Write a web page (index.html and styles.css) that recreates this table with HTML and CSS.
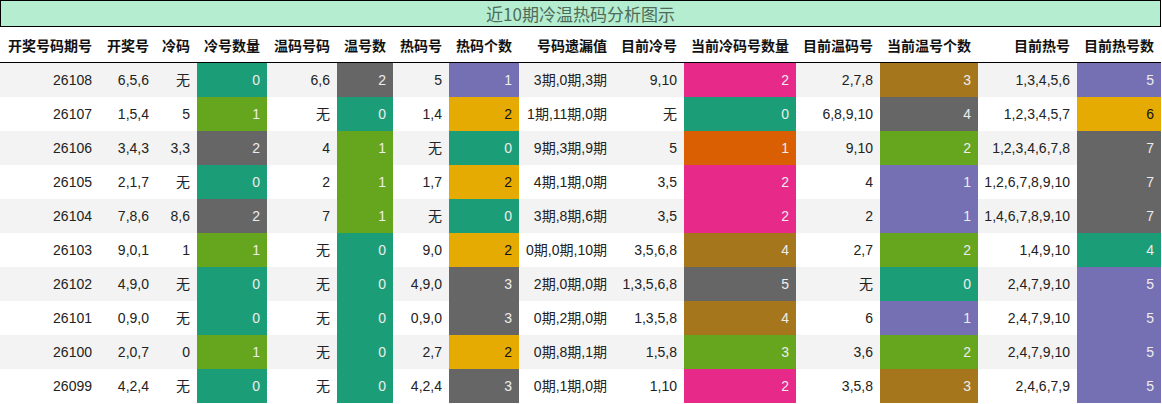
FILE: index.html
```html
<!DOCTYPE html>
<html lang="zh">
<head>
<meta charset="utf-8">
<title>近10期冷温热码分析图示</title>
<link rel="stylesheet" href="styles.css">
</head>
<body>
<div class="page">
  <div class="title">近10期冷温热码分析图示</div>
  <table class="grid">
    <colgroup>
      <col class="w99"><col class="w57"><col class="w41"><col class="w70"><col class="w70">
      <col class="w56"><col class="w56"><col class="w70"><col class="w95"><col class="w70">
      <col class="w112"><col class="w84"><col class="w98"><col class="w99"><col class="w84">
    </colgroup>
    <thead>
      <tr>
        <th>开奖号码期号</th><th>开奖号</th><th>冷码</th><th>冷号数量</th><th>温码号码</th>
        <th>温号数</th><th>热码号</th><th>热码个数</th><th>号码遗漏值</th><th>目前冷号</th>
        <th>当前冷码号数量</th><th>目前温码号</th><th>当前温号个数</th><th>目前热号</th><th>目前热号数</th>
      </tr>
    </thead>
    <tbody>
      <tr>
        <td>26108</td><td>6,5,6</td><td>无</td><td class="c teal">0</td><td>6,6</td>
        <td class="c gray">2</td><td>5</td><td class="c purple">1</td><td>3期,0期,3期</td><td>9,10</td>
        <td class="c pink">2</td><td>2,7,8</td><td class="c brown">3</td><td>1,3,4,5,6</td><td class="c purple">5</td>
      </tr>
      <tr>
        <td>26107</td><td>1,5,4</td><td>5</td><td class="c green">1</td><td>无</td>
        <td class="c teal">0</td><td>1,4</td><td class="c yellow">2</td><td>1期,11期,0期</td><td>无</td>
        <td class="c teal">0</td><td>6,8,9,10</td><td class="c gray">4</td><td>1,2,3,4,5,7</td><td class="c yellow">6</td>
      </tr>
      <tr>
        <td>26106</td><td>3,4,3</td><td>3,3</td><td class="c gray">2</td><td>4</td>
        <td class="c green">1</td><td>无</td><td class="c teal">0</td><td>9期,3期,9期</td><td>5</td>
        <td class="c orange">1</td><td>9,10</td><td class="c green">2</td><td>1,2,3,4,6,7,8</td><td class="c gray">7</td>
      </tr>
      <tr>
        <td>26105</td><td>2,1,7</td><td>无</td><td class="c teal">0</td><td>2</td>
        <td class="c green">1</td><td>1,7</td><td class="c yellow">2</td><td>4期,1期,0期</td><td>3,5</td>
        <td class="c pink">2</td><td>4</td><td class="c purple">1</td><td>1,2,6,7,8,9,10</td><td class="c gray">7</td>
      </tr>
      <tr>
        <td>26104</td><td>7,8,6</td><td>8,6</td><td class="c gray">2</td><td>7</td>
        <td class="c green">1</td><td>无</td><td class="c teal">0</td><td>3期,8期,6期</td><td>3,5</td>
        <td class="c pink">2</td><td>2</td><td class="c purple">1</td><td>1,4,6,7,8,9,10</td><td class="c gray">7</td>
      </tr>
      <tr>
        <td>26103</td><td>9,0,1</td><td>1</td><td class="c green">1</td><td>无</td>
        <td class="c teal">0</td><td>9,0</td><td class="c yellow">2</td><td>0期,0期,10期</td><td>3,5,6,8</td>
        <td class="c brown">4</td><td>2,7</td><td class="c green">2</td><td>1,4,9,10</td><td class="c teal">4</td>
      </tr>
      <tr>
        <td>26102</td><td>4,9,0</td><td>无</td><td class="c teal">0</td><td>无</td>
        <td class="c teal">0</td><td>4,9,0</td><td class="c gray">3</td><td>2期,0期,0期</td><td>1,3,5,6,8</td>
        <td class="c gray">5</td><td>无</td><td class="c teal">0</td><td>2,4,7,9,10</td><td class="c purple">5</td>
      </tr>
      <tr>
        <td>26101</td><td>0,9,0</td><td>无</td><td class="c teal">0</td><td>无</td>
        <td class="c teal">0</td><td>0,9,0</td><td class="c gray">3</td><td>0期,2期,0期</td><td>1,3,5,8</td>
        <td class="c brown">4</td><td>6</td><td class="c purple">1</td><td>2,4,7,9,10</td><td class="c purple">5</td>
      </tr>
      <tr>
        <td>26100</td><td>2,0,7</td><td>0</td><td class="c green">1</td><td>无</td>
        <td class="c teal">0</td><td>2,7</td><td class="c yellow">2</td><td>0期,8期,1期</td><td>1,5,8</td>
        <td class="c green">3</td><td>3,6</td><td class="c green">2</td><td>2,4,7,9,10</td><td class="c purple">5</td>
      </tr>
      <tr>
        <td>26099</td><td>4,2,4</td><td>无</td><td class="c teal">0</td><td>无</td>
        <td class="c teal">0</td><td>4,2,4</td><td class="c gray">3</td><td>0期,1期,0期</td><td>1,10</td>
        <td class="c pink">2</td><td>3,5,8</td><td class="c brown">3</td><td>2,4,6,7,9</td><td class="c purple">5</td>
      </tr>
    </tbody>
  </table>
</div>
</body>
</html>
```
FILE: styles.css
```css
html, body {
  margin: 0;
  padding: 0;
  background: #ffffff;
}

body {
  font-family: "Liberation Sans", "Noto Sans CJK SC", sans-serif;
  font-size: 14px;
  color: #222222;
}

.page {
  width: 1161px;
  display: flex;
  flex-direction: column;
}

.title {
  box-sizing: border-box;
  height: 27px;
  border: 1px solid #000000;
  background: #b4edd0;
  color: #4f6b5a;
  font-family: "Noto Sans CJK SC", "Liberation Sans", sans-serif;
  font-size: 17px;
  line-height: 25px;
  text-align: center;
}

.grid {
  width: 1161px;
  table-layout: fixed;
  border-collapse: collapse;
  border-spacing: 0;
}

.w41 { width: 41px; }
.w56 { width: 56px; }
.w57 { width: 57px; }
.w70 { width: 70px; }
.w84 { width: 84px; }
.w95 { width: 95px; }
.w98 { width: 98px; }
.w99 { width: 99px; }
.w112 { width: 112px; }

.grid th {
  height: 35px;
  padding: 0 7px 0 0;
  text-align: right;
  white-space: nowrap;
  font-family: "Noto Sans CJK SC", "Liberation Sans", sans-serif;
  font-weight: bold;
  font-size: 14px;
  color: #111111;
  border-bottom: 1px solid #000000;
  vertical-align: middle;
}

.grid td {
  height: 34px;
  padding: 0 7px 0 0;
  text-align: right;
  white-space: nowrap;
  vertical-align: middle;
  line-height: 20px;
}

.grid tbody tr:nth-child(odd) td {
  background: #f3f3f3;
}

.grid tbody tr:nth-child(even) td {
  background: #ffffff;
}

.grid tbody tr td.c {
  color: #ededed;
  padding-right: 7px;
}

.grid tbody tr td.teal { background: #1b9e77; }
.grid tbody tr td.green { background: #66a61e; }
.grid tbody tr td.gray { background: #666666; }
.grid tbody tr td.purple { background: #7570b3; }
.grid tbody tr td.yellow { background: #e6ab02; color: #111111; }
.grid tbody tr td.orange { background: #d95f02; }
.grid tbody tr td.pink { background: #e7298a; }
.grid tbody tr td.brown { background: #a6761d; }
```
